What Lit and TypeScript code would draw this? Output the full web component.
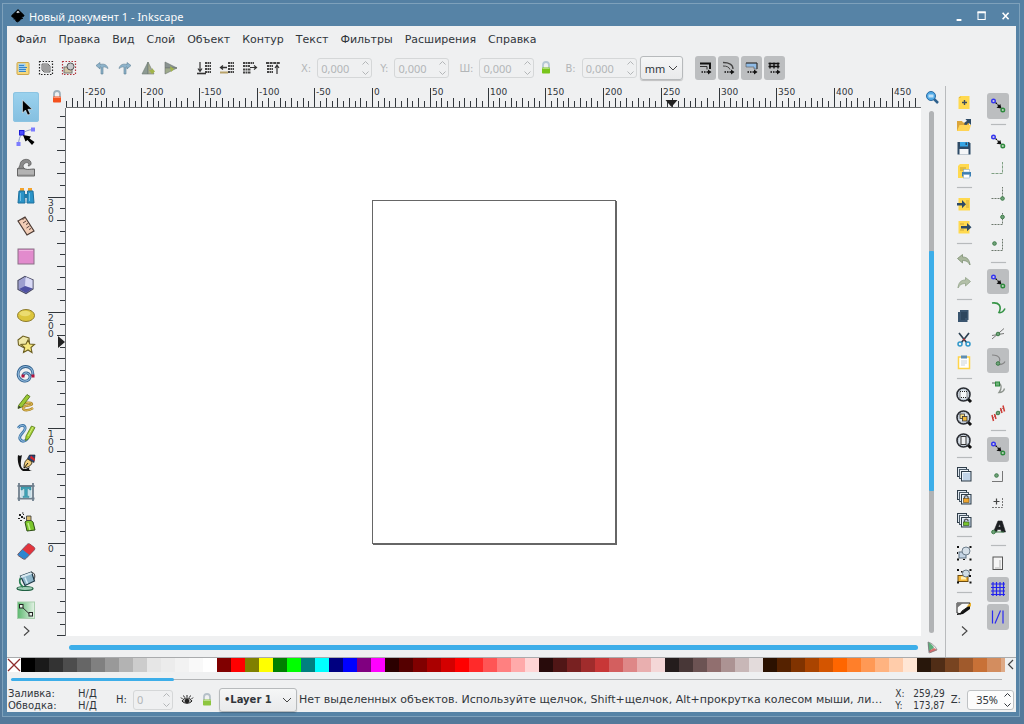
import { LitElement, html, svg, css, SVGTemplateResult } from "lit";
import { customElement, property, state } from "lit/decorators.js";

type Art = SVGTemplateResult;
type Item = { name: string; art: Art; on?: boolean } | null;

const draw = (art: Art, size = 20) => html`<svg class="icon" width=${size} height=${size} viewBox="0 0 20 20" fill="none" aria-hidden="true">${art}</svg>`;

/* ---------- shared fragments ---------- */
const magnifier = (inner: Art) => svg`
  <path d="M14 14l3 3" stroke="#111" stroke-width="3"/>
  <circle cx="9.500" cy="9.500" r="6.500" fill="#e4eaf0" stroke="#2a2d33" stroke-width="1.600"/>
  <circle cx="9.500" cy="9.500" r="5" stroke="#b9c4d0" stroke-width="1"/>${inner}`;
const padlock = (body: string, shackle: string) => svg`
  <path d="M7 10V7a3 3 0 0 1 6 0v3" stroke=${shackle} stroke-width="1.800"/>
  <rect x="6" y="9.500" width="8" height="6" rx="0.800" fill=${body}/>
  <path d="M6.500 10.500h7" stroke="#fff" stroke-opacity=".4"/>`;
const snapNodes = svg`
  <path d="M7.500 6.500l4.500 4.500" stroke="#111" stroke-width="1.200" stroke-dasharray="2 0.800"/>
  <path d="M13.500 12.500l-5-.8 3.800-3.700z" fill="#111"/>
  <circle cx="5.500" cy="5" r="1.800" fill="#ccd" stroke="#3434f0" stroke-width="1.400"/>
  <circle cx="14.800" cy="14" r="1.800" fill="#bcd3bf" stroke="#2d8a3c" stroke-width="1.400"/>`;
const greenDot = (x: number, y: number) => svg`<circle cx=${x} cy=${y} r="1.800" fill="#6fa27a" stroke="#3d7b47"/>`;
const sheetStack = (badge: Art) => svg`
  <rect x="3.500" y="3.500" width="9" height="9" fill="#dfe7ef" stroke="#2f3d49"/>
  <rect x="5.500" y="5.500" width="9" height="9" fill="#eef2f6" stroke="#4b5a67"/>
  <rect x="7.500" y="7.500" width="9.500" height="9.500" fill="#c3d5e8" stroke="#2f3d49"/>
  <path d="M8.500 16V8.500H16" stroke="#edf4fa"/>${badge}`;

/* ---------- toolbox ---------- */
const tools: Item[] = [
  { name: "Выделение", on: true, art: svg`<path d="M6.500 3v13l3-3 2.200 5 2.500-1-2.300-4.700h4.300z" fill="#000" stroke="#fff" stroke-width=".5"/>` },
  { name: "Узлы", art: svg`<path d="M2.500 17C3 9 6 3.500 17 2.500" stroke="#8a98c8" stroke-width="1"/><rect x="3.500" y="3.500" width="4.500" height="4.500" fill="#4a4aff" stroke="#1c1cd8"/><rect x="15" y="0.500" width="4" height="4" fill="#7c7cff"/><rect x="0.500" y="15" width="4" height="4" fill="#7c7cff"/><path d="M7 8l2.500 6.500 2-1.500 4.500 5 2.500-3-5-3.500 1.500-2z" fill="#000"/>` },
  { name: "Корректор", art: svg`<path d="M2 12h7c-2-1-2.500-3.500-1-5 1-1.500 3.500-2 4.500-.5.5 1 .2 1.500-.5 2.500 2.500 0 3.500-1.500 3-3.500C14 1.500 7 1 4.500 5.500 4 8 3.500 9.500 2 12z" fill="#8b8b8b" stroke="#555" stroke-width=".7"/><path d="M1.500 11.500c5 0 6-.5 8 .5s5 0 9 0v7h-17z" fill="#a2a2a2" stroke="#666"/><path d="M2 14h16M2 16h16" stroke="#c4c4c4"/>` },
  { name: "Масштаб", art: svg`<path d="M4 2h4v3H4zM12 2h4v3h-4z" fill="#f3a32d"/><path d="M3 5h5.500l.5 12H2z" fill="#2a93c7" stroke="#1c6f9c"/><path d="M11.500 5H17l1 12h-7z" fill="#2a93c7" stroke="#1c6f9c"/><path d="M8.500 8h3v4h-3z" fill="#1f7aa9"/><path d="M4.500 7v8M13.500 7v8" stroke="#6fbfe4"/>` },
  { name: "Измерить", art: svg`<path d="M2 5l7-4 9 14-7 4z" fill="#f2cdb6" stroke="#4b3a34" stroke-width="1.200"/><path d="M8.500 2.500l-2 1M10 5l-3 2M12 7.500l-2 1M13.500 10l-3 2M15 12.500l-2 1" stroke="#5b4640"/>` },
  { name: "Прямоугольник", art: svg`<rect x="2" y="3" width="16" height="15" fill="#e28bcd" stroke="#8a6f86"/><path d="M3 4.500h14" stroke="#f0b2e0"/>` },
  { name: "Параллелепипед", art: svg`<path d="M9 1.500l8 3.500v9l-7 4.500-8-4V5.500z" fill="#b9bbe0" stroke="#4a4b66" stroke-width="1.200"/><path d="M10 2l6.500 3v8.500L9 11z" fill="#d9daf5"/><path d="M3 6l6-4v9l-6 3z" fill="#9d9fd0"/><path d="M9 11l7.500 2.500L10 18l-7-4z" fill="#4f51a3"/>` },
  { name: "Эллипс", art: svg`<ellipse cx="10" cy="10.500" rx="8.500" ry="6" fill="#dcc53c" stroke="#8d7b2c"/><ellipse cx="9" cy="8.500" rx="5.500" ry="2.800" fill="#ebdc70"/>` },
  { name: "Звезда", art: svg`<path d="M2 6l5-4 6 2 .5 6-5 4L2.500 11z" fill="#efe8a8" stroke="#6d6022" stroke-width="1.100"/><path d="M12 6l1.800 4 4.700.5-3.500 3 1 5-4-2.500-4.500 2.500 1.200-4.800L5 10.500l5-.5z" fill="#f6e87d" stroke="#6d6022" stroke-width="1.100"/>` },
  { name: "Спираль", art: svg`<path d="M16.500 12C18 6 14 2.500 9.500 2.500 4 2.500 1 8 2.500 12.500 4 17 10 18.500 13 15.500c2-2.500 1-6-2-6.500-2.500-.5-4.500 1.500-3.500 3.500" stroke="#2f5f8c" stroke-width="2.800"/><path d="M16.500 12C18 6 14 2.500 9.500 2.500 4 2.500 1 8 2.500 12.500 4 17 10 18.500 13 15.500c2-2.500 1-6-2-6.500-2.500-.5-4.500 1.500-3.500 3.500" stroke="#8cb6da" stroke-width="1.200"/><rect x="5.500" y="10.500" width="3" height="3" fill="#b4123c"/><rect x="15.500" y="10.500" width="3" height="3" fill="#b4123c"/>` },
  { name: "Карандаш", art: svg`<path d="M4 12c5-3 12-3 12-1s-9 1-9 4 6 3 10 0" stroke="#a9842b" stroke-width="2.400"/><path d="M4 12c5-3 12-3 12-1s-9 1-9 4 6 3 10 0" stroke="#e9c45d"/><path d="M2.500 12.500L11 1.500l3 2L6 14 2 15.500z" fill="#9ac934" stroke="#4c6b16" stroke-width=".8"/><path d="M2 15.500l.8-2.800 2.200 1.500z" fill="#333"/>` },
  { name: "Перо", art: svg`<path d="M2 5c3-4 8-3 7 1s-7 6-5 10 7 2 8-2" stroke="#4178a8" stroke-width="2.800"/><path d="M2 5c3-4 8-3 7 1s-7 6-5 10 7 2 8-2" stroke="#9cc4e6"/><path d="M10 13l5.500-10 3.500 1.500-6 11-3.500 2z" fill="#a4d032" stroke="#567a17" stroke-width=".8"/><path d="M12 13l5-9" stroke="#d3ec86"/>` },
  { name: "Каллиграфия", art: svg`<path d="M2 2c-1 6 1 14 5 16h11c-5 0-6-2-4-4-4 2-6 3-8 1C4 12 5 7 6 2 5 3 3 3 2 2z" fill="#111"/><path d="M8 15c0-4 1-8 4-9l4 3c0 3-3 5-8 6z" fill="#f0ce7b" stroke="#332a14" stroke-width=".9"/><path d="M11.500 5.500L13.500 2l5.500 0-1 7.500z" fill="#27457c" stroke="#111" stroke-width=".6"/><path d="M15 2.500l4 3.500-.5 2-4.500-3z" fill="#d9252b"/><path d="M8 15l4-5" stroke="#111"/>` },
  { name: "Текст", art: svg`<path d="M3 1v18M17 1v18M1.500 4h17M1.500 16.500h17" stroke="#6f7f8d" stroke-width="1.800"/><rect x="4.500" y="5" width="11" height="11" fill="#c5dee8"/><path d="M5 5h10v3h-1.300l-.7-1.300h-1.600v7.500h1.600v1.300H7v-1.300h1.600V6.700H7L6.300 8H5z" fill="#3fa2b6" stroke="#26788b" stroke-width=".4"/>` },
  { name: "Распылитель", art: svg`<path d="M9 10c3-3 6-2 8 0l2 8-8 1z" fill="#7bc62d" stroke="#2c4c14"/><path d="M12 11l2 7" stroke="#c4ee8e" stroke-width="1.500"/><path d="M10.500 4h4.500v4.500h-4.500z" fill="#d8bd6e" stroke="#333" stroke-width=".8"/><g fill="#222"><rect x="3" y="2" width="2" height="2"/><rect x="5" y="4" width="2" height="2"/><rect x="2" y="6" width="2" height="1"/><rect x="7" y="2" width="1" height="1"/><rect x="4" y="8" width="2" height="1"/><rect x="7.500" y="5.500" width="1.500" height="1.500"/><rect x="6" y="0.500" width="1.500" height="1"/></g>` },
  { name: "Ластик", art: svg`<path d="M2 13l9-9.500c1-1 2-1 3-.3l4 3c1 .8 1 1.800.3 2.800L10 17.500c-1 1-2 1-3 .3l-4.500-3c-.8-.6-1-1.200-.5-1.800z" fill="#2f86cf" stroke="#71545f" stroke-width=".9"/><path d="M6.500 8.500L11.500 3.500c1-1 1.500-1 2.500-.3l4 3c1 .8 1 1.500.3 2.500L13.500 14z" fill="#e2353c"/>` },
  { name: "Заливка", art: svg`<ellipse cx="9" cy="17.500" rx="8" ry="2" fill="#9fcfb6" stroke="#1f6042" stroke-width="1.200"/><path d="M4.500 7c-1.500 3-1 6 2.500 9" stroke="#2b8055" stroke-width="1.800"/><path d="M4.500 5l11-4 3 9-9.500 4.500z" fill="#8db5c9" stroke="#1e3a49" stroke-width="1.200"/><path d="M4.500 5l11-4 .6 2L5.500 7z" fill="#d7e8f0"/><path d="M9 6.500l2.500 6" stroke="#d5edf6" stroke-width="1.500"/><path d="M15.500 1.500c3.500 0 4 4 2.500 7" stroke="#333"/>` },
  { name: "Градиент", art: svg`<defs><linearGradient id="g"><stop offset="0" stop-color="#5db870"/><stop offset="1" stop-color="#e3f2e5"/></linearGradient></defs><rect x="1.500" y="2" width="17" height="16.500" fill="url(#g)" stroke="#a9cfae"/><path d="M6 7l8 7.500" stroke="#333"/><rect x="3.500" y="4.500" width="3.500" height="3.500" fill="#e8f4ea" stroke="#222"/><rect x="13" y="12.500" width="3.500" height="3.500" fill="#e8f4ea" stroke="#222"/>` },
];

/* ---------- command column ---------- */
const yellowPage = svg`<path d="M6.500 4H15.500v13H4.500V6z" fill="#ffd94f"/><path d="M4.500 6h2V4z" fill="#e3b52e"/>`;
const commands: Item[] = [
  { name: "Создать", art: svg`${yellowPage}<path d="M10.500 8v5M8 10.500h5" stroke="#3c4d5e" stroke-width="1.400"/>` },
  { name: "Открыть", art: svg`<path d="M3 6h5l1 1.500h6V16H3z" fill="#dba53a"/><path d="M3 16l2.500-6H17l-2 6z" fill="#ffd455"/><path d="M10 9.500c.5-2 1.500-3 3-3.500l-1.500-2H17v6l-2-2c-1.500 0-2 1-2.500 2z" fill="#2d4a66"/>` },
  { name: "Сохранить", art: svg`<path d="M3.500 4H15l1.500 1.500V16.500h-13z" fill="#2d4a66"/><path d="M6 4h8v4.500H6z" fill="#35a5e5"/><path d="M11.500 4.500h1.500V7h-1.500z" fill="#2d4a66"/><path d="M5.500 11h9v5.500h-9z" fill="#f4f6f8"/>` },
  { name: "Печать", art: svg`<path d="M6 3h9v14H4V5z" fill="#ffd94f"/><path d="M6 7h6M6 9h4" stroke="#c69f2b"/><rect x="8" y="11" width="9" height="4.500" fill="#3b7fb4"/><rect x="9.500" y="8.500" width="6" height="2.500" fill="#fff" stroke="#7da3c0" stroke-width=".5"/><rect x="9.500" y="13.500" width="6" height="3.500" fill="#fff" stroke="#7da3c0" stroke-width=".5"/>` },
  null,
  { name: "Импорт", art: svg`<rect x="4.500" y="4" width="11.500" height="12.500" fill="#ffd94f"/><path d="M12 7h3M12 9h3M12 11h3M12 13h3" stroke="#cfa93a"/><path d="M3 9h5V6l4 4.200-4 4V11.500H3z" fill="#2d4a66"/>` },
  { name: "Экспорт", art: svg`<rect x="4.500" y="4" width="11" height="12.500" fill="#ffd94f"/><path d="M6 7h4M6 13h4" stroke="#cfa93a"/><path d="M7 9h6V6l4.500 4.200-4.500 4V11.500H7z" fill="#2d4a66"/>` },
  null,
  { name: "Отменить", art: svg`<path d="M3.500 8.500l5-4v2.500c5 0 7 3 7.500 8-2-3.500-4-4.500-7.500-4.500V13z" fill="#a9b79d" stroke="#7c8f72" stroke-width=".8"/>` },
  { name: "Повторить", art: svg`<path d="M16.500 8.500l-5-4v2.500c-5 0-7 3-7.500 8 2-3.500 4-4.500 7.500-4.500V13z" fill="#b3c0a8" stroke="#93a389" stroke-width=".8"/>` },
  null,
  { name: "Копировать", art: svg`<path d="M6 4h8.500v10h-1v2H4V6h2z" fill="#3a556f"/><path d="M7 7h6M7 9h6M7 11h6M7 13h4" stroke="#21384e"/>` },
  { name: "Вырезать", art: svg`<path d="M5 4l7.500 9.500M15 4L7.500 13.500" stroke="#2d4152" stroke-width="1.700"/><circle cx="6" cy="15" r="2" stroke="#2f97c9" stroke-width="1.500"/><circle cx="14" cy="15" r="2" stroke="#2f97c9" stroke-width="1.500"/><circle cx="10" cy="10.500" r="1" fill="#c33"/>` },
  { name: "Вставить", art: svg`<rect x="4.500" y="5" width="11" height="11.500" fill="#fff" stroke="#ffd44a" stroke-width="1.500"/><rect x="7" y="3.500" width="6" height="3" fill="#5f8db0"/><path d="M7 9h6M7 11h6M7 13h4" stroke="#cbd3da"/>` },
  null,
  { name: "Масштаб по выделению", art: magnifier(svg`<rect x="6" y="6.500" width="7" height="6" fill="#f6f8fa" stroke="#222" stroke-dasharray="1 1"/>`) },
  { name: "Масштаб по рисунку", art: magnifier(svg`<rect x="6" y="6" width="4.500" height="4.500" fill="#f7dd87" stroke="#333" stroke-width=".8"/><rect x="8.500" y="8.500" width="4.500" height="4.500" fill="#f0b93c" stroke="#333" stroke-width=".8"/>`) },
  { name: "Масштаб по странице", art: magnifier(svg`<rect x="7" y="5.500" width="5" height="8" fill="#eef0f2" stroke="#333"/>`) },
  null,
  { name: "Продублировать", art: sheetStack(svg``) },
  { name: "Создать клон", art: sheetStack(svg`<path d="M10.500 12v-1.500a1.800 1.800 0 0 1 3.600 0V12" stroke="#555" stroke-width="1.200"/><rect x="9.500" y="11.500" width="5.500" height="4" fill="#f0a62d" stroke="#6b4a12" stroke-width=".6"/>`) },
  { name: "Отсоединить клон", art: sheetStack(svg`<path d="M10.500 13v-2a1.800 1.800 0 0 1 3.600 0" stroke="#555" stroke-width="1.200"/><rect x="9.500" y="12" width="5.500" height="3.500" fill="#7ac52e" stroke="#2b4c12" stroke-width=".6"/>`) },
  null,
  { name: "Сгруппировать", art: svg`<rect x="5" y="9" width="7" height="6" fill="#c3d3e3" stroke="#5c6f80"/><circle cx="12" cy="8" r="4" fill="#d5dfe8" stroke="#6e7e8c"/><g fill="#111"><rect x="3" y="3" width="2" height="2"/><rect x="15.500" y="3" width="2" height="2"/><rect x="3" y="15.500" width="2" height="2"/><rect x="15.500" y="15.500" width="2" height="2"/><rect x="3" y="9" width="1" height="2"/><rect x="9" y="16" width="2" height="1"/></g>` },
  { name: "Разгруппировать", art: svg`<rect x="4" y="9.500" width="10" height="6" fill="#f4b83a" stroke="#6d4c10"/><rect x="7" y="10.500" width="5" height="3" fill="#fff0b5"/><circle cx="12" cy="7.500" r="3.500" fill="#cfdde6" stroke="#667885"/><g fill="#111"><rect x="3" y="3" width="2" height="2"/><rect x="15.500" y="3" width="2" height="2"/><rect x="3" y="15.500" width="2" height="2"/><rect x="15.500" y="15.500" width="2" height="2"/><rect x="15" y="9" width="2" height="2"/><rect x="7" y="5" width="1.500" height="1.500"/></g>` },
  null,
  { name: "Заливка и обводка", art: svg`<path d="M3 4h13L14 8l-6 4-1 3-4-1z" fill="#fafafa" stroke="#222"/><path d="M3 4h6L3 9z" fill="#777"/><path d="M3 15c3 0 5-3 8-5l5-4v4l-7 5-6 1z" fill="#111"/><path d="M12.500 7.500L17 3.500v4z" fill="#eab02a"/>` },
];

/* ---------- snapping column ---------- */
const gray = "#8c938c";
const snaps: Item[] = [
  { name: "Прилипание", on: true, art: snapNodes },
  null,
  { name: "Прилипать площадкой", art: snapNodes },
  { name: "К краям площадки", art: svg`<path d="M3.500 15.500h11V4" stroke="#7fa083" stroke-dasharray="3 1"/>` },
  { name: "К углам площадки", art: svg`<path d="M3.500 14.500h11V3" stroke="#6c786d" stroke-dasharray="2 1"/>${greenDot(14.5, 14.5)}` },
  { name: "К серединам краёв", art: svg`<path d="M3.500 15.500h11V4" stroke="#6c786d" stroke-dasharray="2 1"/>${greenDot(14.5, 8)}` },
  { name: "К центрам площадок", art: svg`<path d="M3.500 15.500h11V4" stroke="#6c786d" stroke-dasharray="2 1"/>${greenDot(6.5, 8.5)}` },
  null,
  { name: "Прилипать узлами", on: true, art: snapNodes },
  { name: "К контурам", art: svg`<path d="M4 5c7-1 10 3 7 9.500 3 .5 5-2 6-4" stroke="#349345" stroke-width="1.600"/>` },
  { name: "К пересечениям", art: svg`<path d="M4 15L16 4.500M4 11.500l12-2" stroke="#777"/>${greenDot(10, 10)}` },
  { name: "К точкам перегиба", on: true, art: svg`<path d="M4 5c8 0 10 5 5 9.500 4 .5 7-1 8-3" stroke="#858585" stroke-width="1.200"/>${greenDot(10, 13.5)}` },
  { name: "К сглаженным узлам", art: svg`<path d="M4 6h6c4 1 4 6 1 9.500 3 0 5-2 5.500-4" stroke=${gray} stroke-width="1.300"/><rect x="7.500" y="5" width="4" height="4" fill="#6fb27a" stroke="#2d8a3c"/>` },
  { name: "К серединам линий", art: svg`<path d="M4 16L16 4" stroke="#999"/>${greenDot(10, 10)}<path d="M4 12l1.500 6M6.500 11l1.500 5M12.500 5l1.500 5M15 2.500l1.500 6" stroke="#d03b35" stroke-width="1.500"/>` },
  null,
  { name: "Прилипать другими точками", on: true, art: snapNodes },
  { name: "К центрам объектов", art: svg`<path d="M4 15.500h10.500V5" stroke="#777"/>${greenDot(8.5, 9.5)}` },
  { name: "К центрам вращения", art: svg`<path d="M4 15.500h10.500V5" stroke="#777" stroke-dasharray="2 1"/><path d="M8.500 6.500v6M5.500 9.500h6" stroke="#444" stroke-width="1.200"/>` },
  { name: "К базовой линии текста", art: svg`<path d="M5.500 15L10 4h4l3.500 11h-4l-.6-2.500H9.500L8.500 15zm4.700-5h2.200l-.6-3z" fill="#1c1f22" stroke="#1c1f22" stroke-width=".6"/><path d="M4 15h12" stroke="#3d7b47"/>${greenDot(5.5, 15)}` },
  null,
  { name: "К границе страницы", art: svg`<rect x="5" y="4" width="9.500" height="12.500" fill="#f5f5f5" stroke="#555"/><path d="M12 7v8H7" stroke="#d5d5d5" stroke-width="2"/>` },
  { name: "К сеткам", on: true, art: svg`<path d="M5 3v14M8.500 3v14M12 3v14M15.500 3v14M3 5h14M3 8.500h14M3 12h14M3 15.500h14" stroke="#2222ee" stroke-width="1.200"/>` },
  { name: "К направляющим", on: true, art: svg`<path d="M4.500 3.500v13M15 3.500v13M7 16.500L12.500 3.500" stroke="#2b2bf0" stroke-width="1.200"/>` },
];

/* ---------- tool controls bar ---------- */
const lines = (x: number, widths: number[]) => svg`${widths.map((w, i) => svg`<path d="M${x} ${5 + i * 3}h${w}" stroke="#444" stroke-width="2" stroke-dasharray="2 0.500"/>`)}`;
const selectActions: Item[] = [
  { name: "Выделить всё", art: svg`<rect x="4" y="4.500" width="12" height="12" rx="1" fill="#f6d87c" stroke="#cda64c"/><rect x="5.500" y="5.500" width="7" height="8.500" fill="#9ccdf2"/><path d="M6 7.500h5M6 9.500h8M6 11.500h7M6 13.500h7" stroke="#3a86c8"/>` },
  { name: "Выделить во всех слоях", art: svg`<rect x="3.500" y="3.500" width="13" height="13" stroke="#222" stroke-dasharray="1.500 1.500" stroke-width="1.200"/><path d="M6 6h6l2 2v6H8l-2-2z" fill="#d8d8d8" stroke="#666"/><path d="M7 8h6M7 10h6M7 12h6" stroke="#666"/>` },
  { name: "Снять выделение", art: svg`<rect x="3.500" y="3.500" width="13" height="13" stroke="#b2343c" stroke-dasharray="1.500 1.500" stroke-width="1.200"/><rect x="5" y="9" width="8" height="6" fill="#cfc3a4" stroke="#777"/><circle cx="11.500" cy="8.500" r="3.500" fill="#c7c9cb" stroke="#555"/>` },
];
const turnActions: Item[] = [
  { name: "Повернуть влево", art: svg`<path d="M4 7.500l4-3v2c4-1 7 0 8 4-2-1-3-2-5-1.500V16H9V9H8v2z" fill="#8db3cb" stroke="#5d7f96" stroke-width=".6"/>` },
  { name: "Повернуть вправо", art: svg`<path d="M16 7.500l-4-3v2c-4-1-7 0-8 4 2-1 3-2 5-1.500V16h2V9h1v2z" fill="#8db3cb" stroke="#5d7f96" stroke-width=".6"/>` },
  { name: "Отразить горизонтально", art: svg`<path d="M10 4v12H4z" fill="#8d9a93" stroke="#6d7a74" stroke-width=".6"/><path d="M10 4l6 12h-6z" fill="#a8ab8d" stroke="#6d7a74" stroke-width=".6"/><path d="M11 12h3v-2l3 3.500-3 2.500z" fill="#a2b54a"/>` },
  { name: "Отразить вертикально", art: svg`<path d="M4 4l12 6H4z" fill="#8a9391" stroke="#6b7371" stroke-width=".6"/><path d="M4 16l12-6H4z" fill="#9eaa8c" stroke="#6b7371" stroke-width=".6"/><path d="M9 8l4 3-3 3z" fill="#a2b54a"/>` },
];
const orderActions: Item[] = [
  { name: "Опустить на задний план", art: svg`${lines(11, [6, 6, 6, 6])}<path d="M6 4v9M4 10.500l2 3 2-3" stroke="#333" stroke-width="1.200"/><path d="M3 15.500h9" stroke="#333" stroke-width="1.600"/>` },
  { name: "Опустить", art: svg`${lines(11, [6, 6, 6, 6])}<path d="M10 9.500H4M6 7.500L3.500 9.500 6 11.500" stroke="#333" stroke-width="1.300"/><path d="M3 14.500h8" stroke="#b9a36a" stroke-width="2"/>` },
  { name: "Поднять", art: svg`<path d="M3 5h11M3 8h7M3 11.500h8M3 14.500h8" stroke="#444" stroke-width="2" stroke-dasharray="2 0.500"/><path d="M10 9.500h6M14 7.500l2.500 2-2.500 2" stroke="#333" stroke-width="1.200"/>` },
  { name: "Поднять на передний план", art: svg`<path d="M3 5h14" stroke="#444" stroke-width="2" stroke-dasharray="3 .6"/><path d="M4 8h6M4 11h6M4 14h6" stroke="#444" stroke-width="2" stroke-dasharray="2 0.500"/><path d="M14 16V7M12 10l2-3 2 3" stroke="#333" stroke-width="1.200"/>` },
];
const moveMark = svg`<path d="M6.500 14h7" stroke="#111" stroke-dasharray="1.500 1" stroke-width="1.300"/><path d="M13 11.500l3.500 2.500-3.500 2.500z" fill="#111"/>`;
const affects: Item[] = [
  { name: "Менять толщину обводки", on: true, art: svg`<path d="M5 5.500h10v5.500" stroke="#111" stroke-width="2"/><path d="M5 8.500h7v3" stroke="#333"/>${moveMark}` },
  { name: "Менять радиус углов", on: true, art: svg`<path d="M5 4.500c6 0 10 2 10 6.500" stroke="#444" stroke-width="1.300"/><path d="M5 8c4 0 6 1 7 3.500" stroke="#444"/>${moveMark}` },
  { name: "Двигать градиенты", on: true, art: svg`<path d="M5 5h11v6h-3V9H5z" fill="#8fbbe6" stroke="#555" stroke-width=".6"/><path d="M5 5h11v6" stroke="#333"/>${moveMark}` },
  { name: "Двигать текстуры", on: true, art: svg`<path d="M4.500 5.500h11M4.500 8.500h11M6 4.500v6M10 4.500v6M14 4.500v6" stroke="#111" stroke-width="1.400"/>${moveMark}` },
];

/* ---------- palette ---------- */
const palette = [
  "000000 1a1a1a 333333 4d4d4d 666666 808080 999999 b3b3b3 cccccc e6e6e6 ececec f2f2f2 f9f9f9 ffffff",
  "800000 ff0000 808000 ffff00 008000 00ff00 008080 00ffff 000080 0000ff 800080 ff00ff",
  "2b0000 550000 800000 aa0000 d40000 ff0000 ff2a2a ff5555 ff8080 ffaaaa ffd5d5",
  "280b0b 501616 782121 a02c2c c83737 d35f5f de8787 e9afaf f4d7d7",
  "241c1c 483737 6c5353 916f6f ac9393 c8b7b7 e3dbdb",
  "2b1100 552200 803300 aa4400 d45500 ff6600 ff7f2a ff9955 ffb380 ffccaa ffe6d5",
  "28170b 502d16 784421 a05a2c c87137 d38d5f deaa87 e9c6af f4e3d7",
].join(" ").split(" ");

const controlCss = css`
  button, input, select { font: inherit; color: inherit; margin: 0; padding: 0; border: 0; background: none; }
  .icon { display: block; flex: none; }
`;

/** Number field with a pair of stepper arrows. */
@customElement("spin-field")
export class SpinField extends LitElement {
  @property() label = "";
  @property() value = "";
  @property({ type: Boolean }) off = false;
  static styles = [controlCss, css`
    :host { display: flex; align-items: center; font-size: 10px; }
    .label { margin-right: 6px; }
    .box { display: flex; align-items: center; box-sizing: border-box; width: var(--field, 55px); height: 20px; padding: 0 1px 0 3px;
      border: 1px solid #bfc2c4; border-radius: 3px; background: #fcfcfc; font-family: "Noto Sans", sans-serif; font-size: 11px; }
    .input { flex: 1; min-width: 0; text-align: var(--align, left); }
    .steps { display: flex; flex-direction: column; gap: 2px; }
    .step { display: block; height: 8px; }
    .step svg { display: block; }
    .off { color: #b3b6b8; }
    .off.box { background: none; border-color: #d5d7d8; }
    .dark { color: inherit; }
  `];
  render() {
    const c = this.off ? "off" : "";
    return html`<label class="label ${this.classList.contains("opacity") ? "dark" : c}" for="n">${this.label}</label>
      <div class="box ${c}">
        <input class="input" id="n" .value=${this.value} ?disabled=${this.off}>
        <div class="steps">
          <button class="step" aria-label="Больше" ?disabled=${this.off}><svg width="9" height="8" viewBox="0 0 9 8" fill="none" stroke="currentColor"><path d="M1.500 5.500l3-3 3 3"/></svg></button>
          <button class="step" aria-label="Меньше" ?disabled=${this.off}><svg width="9" height="8" viewBox="0 0 9 8" fill="none" stroke="currentColor"><path d="M1.500 2.500l3 3 3-3"/></svg></button>
        </div>
      </div>`;
  }
}

/** Drop-down with a framed, raised look. */
@customElement("drop-down")
export class DropDown extends LitElement {
  @property() label = "";
  @property() value = "";
  static styles = [controlCss, css`
    :host { display: flex; position: relative; }
    .select { appearance: none; flex: 1; min-width: 0; box-sizing: border-box; height: 24px; padding: 0 14px 0 4px; border: 1px solid #b7babc; border-radius: 3px;
      background: linear-gradient(#f5f6f6, #e9eaeb); box-shadow: 0 1px 1px rgba(0, 0, 0, .2); }
    .arrow { position: absolute; right: 4px; top: 8px; pointer-events: none; }
  `];
  render() {
    return html`<select class="select" aria-label=${this.label}><option>${this.value}</option></select>
      <svg class="arrow" width="12" height="8" viewBox="0 0 12 8" fill="none" stroke="#444"><path d="M2 2l4 4 4-4"/></svg>`;
  }
}

@customElement("icon-strip")
export class IconStrip extends LitElement {
  @property({ attribute: false }) items: Item[] = [];
  @property() kind = "";
  static styles = [controlCss, css`
    :host { display: flex; }
    .strip { display: flex; flex: 1; }
    .cell { display: flex; align-items: center; justify-content: center; border-radius: 3px; }
    .column { flex-direction: column; align-items: stretch; }
    .column .cell { flex: 1 1 0; min-height: 0; }
    .sep { display: flex; align-items: center; justify-content: center; flex: 0 0 10px; }
    .sep::before { content: ""; width: 15px; height: 1px; background: #b7babc; box-shadow: 0 0 1px #b7babc; }
    .row .cell { width: 23px; height: 24px; }
    .affect { gap: 2px; }
    .affect .cell { width: 21px; }
    .on { background: #bcbec0; }
    .tool .on { background: linear-gradient(#9bd2ee, #84bfe0); box-shadow: inset 0 0 0 1px #8cc4e2; margin: 1px 0; }
    .snap .on { margin: 1px 0; }
  `];
  render() {
    return html`<div class="strip ${this.kind}">${this.items.map((i) => i
      ? html`<button class="cell ${i.on ? "on" : ""}" aria-label=${i.name}>${draw(i.art)}</button>`
      : html`<span class="sep"></span>`)}</div>`;
  }
}

/* Ruler scale: pixels per millimetre and where the page origin falls. */
const SCALE = 1.155;
const ORIGIN_X = 306;
const ORIGIN_Y = 435;

@customElement("app-root")
export class AppRoot extends LitElement {
  @state() private boardWidth = 0;
  @state() private boardHeight = 0;
  private watcher?: ResizeObserver;

  static styles = [controlCss, css`
    :host { display: block; }
    .desktop { box-sizing: border-box; height: 100vh; padding: 3px 4px 7px 2px; background: linear-gradient(#5480a3 60%, #54799a); font-family: "DejaVu Sans", sans-serif; font-size: 11px; color: #31363b; }
    .window { box-sizing: border-box; display: flex; flex-direction: column; height: 100%; padding: 0 3px 4px 4px; border: 1px solid #7ea1bb; background: #5683a6; }
    .title { display: flex; align-items: center; flex: none; height: 22px; padding: 2px 3px 0 3px; box-sizing: border-box; color: #fcfcfc; font-family: "Noto Sans", sans-serif; }
    .name { flex: 1; margin: 0 0 0 3px; font-size: 11px; font-weight: 400; }
    .winbtns { display: flex; gap: 7px; }
    .winbtns button { width: 16px; height: 16px; display: flex; justify-content: center; align-items: center; }
    .body { display: flex; flex-direction: column; flex: 1; min-height: 0; background: #eff0f1; }
    .menu { display: flex; gap: 12px; flex: none; height: 26px; align-items: center; padding-left: 9px; }
    .menu button { white-space: nowrap; }
    .bar { display: flex; align-items: center; flex: none; height: 24px; padding: 4px 0 6px 4px; }
    .gap { margin-left: 10px; }
    .f1 { margin-left: 17px; } .f2 { margin-left: 8px; } .f3 { margin-left: 10px; } .f4 { margin-left: 9px; }
    .lock { margin-left: 2px; }
    .units { width: 43px; margin-left: 3px; font-family: "Noto Sans", sans-serif; }
    .affects { margin-left: 12px; }
    .main { display: flex; flex: 1; min-height: 0; }
    .toolbox { display: flex; flex-direction: column; flex: none; width: 26px; padding: 5px 8px 0 6px; }
    .tools { flex: 1; }
    .more { display: flex; justify-content: center; align-items: center; height: 12px; margin-bottom: 20px; }
    .board { display: grid; flex: 1; min-width: 0; grid-template: 22px minmax(0, 1fr) 21px / 19px minmax(0, 1fr) 24px; }
    .corner { display: flex; align-items: center; justify-content: center; padding-right: 3px; }
    .corner:first-child { padding-right: 0; }
    .ruler { display: block; width: 100%; height: 100%; overflow: hidden; }
    .canvas { position: relative; overflow: hidden; background: #fff; }
    .page { position: absolute; left: 306px; top: 92px; width: 242px; height: 342px; border: 1px solid #666; box-shadow: 1px 1px 0 #666; }
    .vscroll { display: flex; justify-content: center; padding: 3px 3px 3px 0; }
    .vtrack { width: 5px; border-radius: 3px; background: #b1b3b5; display: flex; flex-direction: column; }
    .vthumb { background: #3daee9; height: 46%; margin-top: 140px; border-radius: 1px; }
    .hscroll { display: flex; align-items: center; padding: 1px 3px 0; }
    .hthumb { flex: 1; height: 5px; border-radius: 3px; background: #3daee9; }
    .commands { display: flex; flex-direction: column; flex: none; width: 37px; border-left: 1px solid #b9bbbd; padding-top: 5px; box-sizing: border-box; }
    .commands icon-strip { flex: 1; }
    .commands .more { height: 22px; margin-bottom: 15px; }
    .snaps { display: flex; flex: none; width: 22px; padding: 6px 7px 26px 5px; }
    .snaps icon-strip { flex: 1; }
    .palette { display: flex; flex: none; align-items: stretch; height: 14px; border-top: 1px solid #a9abad; }
    .colors { display: flex; flex: 1; min-width: 0; overflow: hidden; }
    .swatch { flex: 0 0 14px; height: 14px; }
    .open { flex: none; width: 11px; }
    .pscroll { flex: none; margin: 6px 14px 0 4px; height: 3px; background: linear-gradient(transparent 33%, #b1b3b5 33%, #b1b3b5 66%, transparent 66%); }
    .pthumb { width: 16.4%; height: 3px; border-radius: 2px; background: #3daee9; }
    .status { display: flex; align-items: center; flex: none; height: 25px; padding: 6px 2px 0 1px; }
    .style { display: grid; grid-template-columns: 70px 38px; line-height: 12px; margin: 0; font-size: 10px; }
    .style dd, .xy dd { margin: 0; }
    .opacity { --field: 40px; }
    .eye { margin-left: 4px; }
    .layer { width: 78px; margin-left: 2px; font-weight: 700; font-size: 10px; }
    .hint { flex: 1; min-width: 0; margin: 0 0 0 2px; white-space: nowrap; overflow: hidden; }
    .xy { display: grid; grid-template-columns: 18px auto; line-height: 12px; margin: 0 6px 0 2px; font-family: "DejaVu Sans Condensed", "DejaVu Sans", sans-serif; font-size: 10px; }
    .zoom { --field: 47px; --align: center; }
  `];

  firstUpdated() {
    const canvas = this.renderRoot.querySelector(".canvas")!;
    this.watcher = new ResizeObserver(() => {
      this.boardWidth = canvas.clientWidth;
      this.boardHeight = canvas.clientHeight;
    });
    this.watcher.observe(canvas);
  }

  disconnectedCallback() {
    super.disconnectedCallback();
    this.watcher?.disconnect();
  }

  private tick(x1: number, y1: number, x2: number, y2: number) {
    return svg`<path d="M${x1} ${y1}L${x2} ${y2}" stroke="#31363b"/>`;
  }

  private topRuler() {
    const marks = [];
    for (let mm = -265; ORIGIN_X + mm * SCALE < this.boardWidth; mm += 5) {
      const x = Math.round(ORIGIN_X + mm * SCALE) + 0.5;
      const major = mm % 50 === 0;
      marks.push(this.tick(x, major ? 2 : mm % 10 === 0 ? 12 : 15, x, 21));
      if (major && x + 24 < this.boardWidth) marks.push(svg`<text x=${x + 1.5} y="9" font-size="9" fill="#31363b">${mm}</text>`);
    }
    return html`<svg class="ruler" role="img" aria-label="Горизонтальная линейка">${marks}
      <path d="M599.500 14h12l-6 7z" fill="#222"/><path d="M0 21.500H${this.boardWidth}" stroke="#6c6f71"/></svg>`;
  }

  private sideRuler() {
    const marks = [];
    const lowest = -Math.floor((this.boardHeight - ORIGIN_Y) / SCALE / 10) * 10;
    for (let mm = lowest; ORIGIN_Y - mm * SCALE > 0; mm += 10) {
      const y = Math.round(ORIGIN_Y - mm * SCALE) + 0.5;
      const major = mm % 100 === 0;
      marks.push(this.tick(major ? 1 : mm % 20 === 0 ? 10 : 13, y, 18, y));
      if (major) String(Math.abs(mm)).split("").forEach((d, i) =>
        marks.push(svg`<text x="1" y=${y + 8 + i * 8} font-size="9" fill="#31363b">${d}</text>`));
    }
    return html`<svg class="ruler" role="img" aria-label="Вертикальная линейка">${marks}
      <path d="M11 228v12l7-6z" fill="#222"/><path d="M18.500 0V${this.boardHeight}" stroke="#6c6f71"/></svg>`;
  }

  render() {
    const menus = ["Файл", "Правка", "Вид", "Слой", "Объект", "Контур", "Текст", "Фильтры", "Расширения", "Справка"];
    const chevron = svg`<path d="M8 5.500l5 4.500-5 4.500" stroke="#444" stroke-width="1.100"/>`;
    return html`<div class="desktop"><div class="window">
      <header class="title">
        ${draw(svg`<path d="M10 2l7 6.500c1 1 .5 2-1 2.500l-2 .5 2 1.500-3 1-1 2-3 1.500-2-1.500.5-1.500-3-1 1.500-1-2.500-1c-1.500-.5-2-1.500-1-2.500z" fill="#000" stroke="#000"/><path d="M10 3.500l2.500 2.200-1.500-.2-1 1-1.500-1-1 .2z" fill="#dfe5ea"/>`, 16)}
        <h1 class="name">Новый документ 1 - Inkscape</h1>
        <div class="winbtns">
          <button aria-label="Свернуть">${draw(svg`<path d="M7 15h6" stroke="#fff" stroke-width="2.500"/>`, 16)}</button>
          <button aria-label="Развернуть">${draw(svg`<path d="M5 5h9v9.500H5z" stroke="#fff" stroke-width="1.300"/><path d="M4.400 5.500h10.200" stroke="#fff" stroke-width="2.200"/>`, 16)}</button>
          <button aria-label="Закрыть">${draw(svg`<path d="M7 6l7.500 8M14.500 6L7 14" stroke="#fff" stroke-width="2"/>`, 16)}</button>
        </div>
      </header>
      <div class="body">
        <nav class="menu">${menus.map((m) => html`<button>${m}</button>`)}</nav>
        <div class="bar">
          <icon-strip kind="row" .items=${selectActions}></icon-strip>
          <icon-strip class="gap" kind="row" .items=${turnActions}></icon-strip>
          <icon-strip class="gap" kind="row" .items=${orderActions}></icon-strip>
          <spin-field class="f1" label="X:" value="0,000" off></spin-field>
          <spin-field class="f2" label="Y:" value="0,000" off></spin-field>
          <spin-field class="f3" label="Ш:" value="0,000" off></spin-field>
          <button class="lock" aria-label="Сохранять пропорции">${draw(padlock("#79c51c", "#b5c7d4"))}</button>
          <spin-field class="f4" label="В:" value="0,000" off></spin-field>
          <drop-down class="units" label="Единицы" value="mm"></drop-down>
          <icon-strip class="affects" kind="row affect" .items=${affects}></icon-strip>
        </div>
        <div class="main">
          <div class="toolbox">
            <icon-strip class="tools" kind="column tool" .items=${tools}></icon-strip>
            <button class="more" aria-label="Ещё инструменты">${draw(chevron)}</button>
          </div>
          <div class="board">
            <button class="corner" aria-label="Заблокировать направляющие">${draw(padlock("#f4511e", "#9fb0bb"))}</button>
            ${this.topRuler()}
            <button class="corner" aria-label="Масштаб">${draw(svg`<path d="M12 12l4 4" stroke="#2d5f8c" stroke-width="2.500"/><circle cx="9" cy="9" r="4.500" fill="#4fa9e6" stroke="#2c6ca3"/><rect x="6.500" y="7.500" width="5" height="3" fill="#bfe1f7"/>`)}</button>
            ${this.sideRuler()}
            <div class="canvas"><div class="page"></div></div>
            <div class="vscroll"><div class="vtrack"><div class="vthumb"></div></div></div>
            <span></span>
            <div class="hscroll"><div class="hthumb"></div></div>
            <button class="corner" aria-label="Управление цветом">${draw(svg`<path d="M6 5l4 10-3 0z" fill="#7a3d8d"/><path d="M6 5c3 1 5 4 6 6l-5 3z" fill="#5fae7b"/><path d="M12 11l3 2-7 3-1-2z" fill="#d86c6c"/><path d="M6 5c4 1 8 5 9 8l-8 3z" stroke="#777" stroke-width=".7"/>`)}</button>
          </div>
          <div class="commands">
            <icon-strip kind="column" .items=${commands}></icon-strip>
            <button class="more" aria-label="Ещё команды">${draw(chevron)}</button>
          </div>
          <div class="snaps"><icon-strip kind="column snap" .items=${snaps}></icon-strip></div>
        </div>
        <div class="palette">
          <div class="colors">
            <button class="swatch" aria-label="Без цвета"><svg class="icon" width="14" height="14" viewBox="0 0 14 14"><path d="M0 0h14v14H0z" fill="#fff"/><path d="M1 1l12 12M13 1L1 13" stroke="#8d2b2b" stroke-width="1.300"/></svg></button>
            ${palette.map((c) => html`<button class="swatch" aria-label="#${c}" style="background:#${c}"></button>`)}
          </div>
          <button class="open" aria-label="Меню палитры"><svg class="icon" width="11" height="12" viewBox="0 0 11 12" fill="none"><path d="M8 1L3.500 5.500 8 10" stroke="#444" stroke-width="1.200"/></svg></button>
        </div>
        <div class="pscroll"><div class="pthumb"></div></div>
        <footer class="status">
          <dl class="style"><dt>Заливка:</dt><dd>Н/Д</dd><dt>Обводка:</dt><dd>Н/Д</dd></dl>
          <spin-field class="opacity" label="Н:" value="0" off></spin-field>
          <button class="eye" aria-label="Видимость слоя">${draw(svg`<path d="M5 11c2.500-4 7.500-4 10 0-2.500 3-7.500 3-10 0z" fill="#bbb" stroke="#222"/><circle cx="10" cy="11" r="2.300" fill="#222"/><path d="M5.500 9L4 7.500M7.500 7.500L6.500 5.500M12.500 7.500l1-2M14.500 9l1.500-1.500M10 7V5" stroke="#222"/>`)}</button>
          <button aria-label="Блокировка слоя">${draw(padlock("#8dc63f", "#b5c0c8"))}</button>
          <drop-down class="layer" label="Слой" value="•Layer 1"></drop-down>
          <p class="hint">Нет выделенных объектов. Используйте щелчок, Shift+щелчок, Alt+прокрутка колесом мыши, ли…</p>
          <dl class="xy"><dt>X:</dt><dd>259,29</dd><dt>Y:</dt><dd>173,87</dd></dl>
          <spin-field class="zoom" label="Z:" value="35%"></spin-field>
        </footer>
      </div>
    </div></div>`;
  }
}
